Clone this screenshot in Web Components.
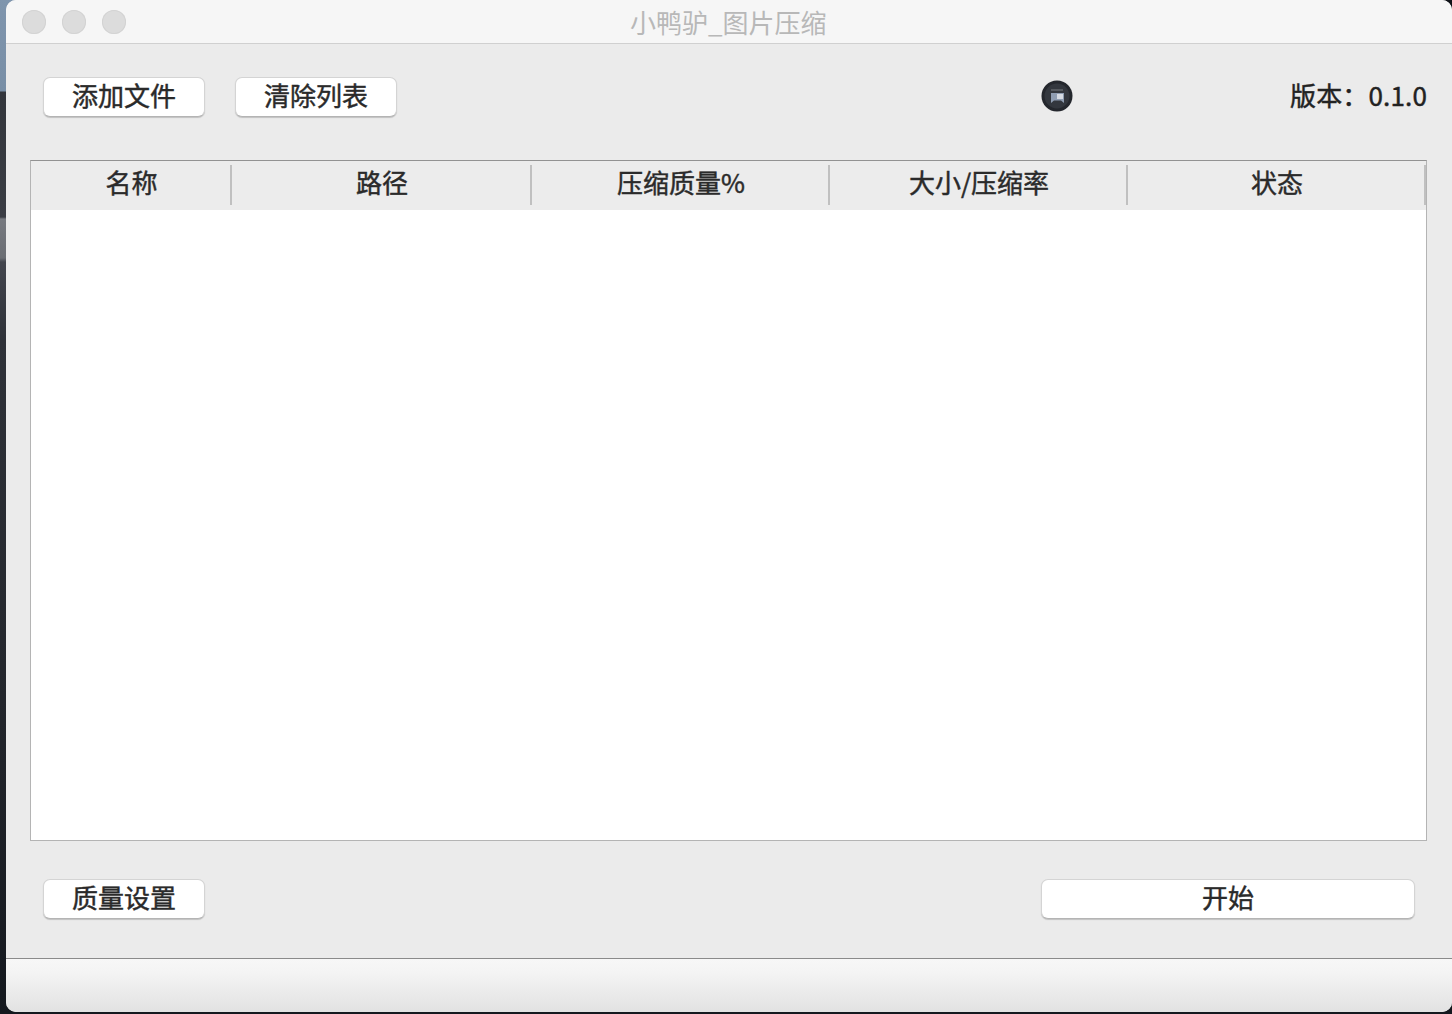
<!DOCTYPE html>
<html lang="zh">
<head>
<meta charset="utf-8">
<title>小鸭驴_图片压缩</title>
<style>
	html, body { margin: 0; height: 100%; }
	body {
		width: 1452px;
		height: 1014px;
		overflow: hidden;
		background:
			linear-gradient(#0f1218, #0f1218) top right / 14px 14px no-repeat,
			linear-gradient(to bottom, #7f95ad 0, #788ea6 91px, #33363c 92px, #3a3d44 217px, #777a80 219px, #6a6d73 258px, #42454d 262px, #2e3138 340px, #23262c 700px, #14181e 1014px);
		font-family: "Noto Sans CJK SC", "Liberation Sans", sans-serif;
		color: #2a2a2a;
	}
</style>
</head>
<body>
<app-window label="小鸭驴_图片压缩">
	<div slot="toolbar" style="display:flex;align-items:center;height:100%">
		<push-button style="width:162px">添加文件</push-button>
		<push-button style="width:162px;margin-left:30px">清除列表</push-button>
		<app-logo style="margin-left:644px"></app-logo>
		<span class="version" style="margin-left:auto;font-size:26px;line-height:36px;margin-top:-4px;letter-spacing:.15px;white-space:nowrap;color:#222;-webkit-text-stroke:.45px #222">版本：0.1.0</span>
	</div>
	<file-table slot="content" columns="名称:201,路径:300,压缩质量%:298,大小/压缩率:298,状态:298"></file-table>
	<div slot="actions" style="display:flex;align-items:center;justify-content:space-between">
		<push-button style="width:162px">质量设置</push-button>
		<push-button style="width:374px">开始</push-button>
	</div>
</app-window>

<script>
class AppWindow extends HTMLElement {
	constructor() {
		super();
		const label = this.getAttribute('label');
		this._root = this.attachShadow({mode: 'open'});
		this._root.innerHTML = `
			<style>
				:host {
					display: flex;
					flex-direction: column;
					box-sizing: border-box;
					width: 1446px;
					height: 1012px;
					margin-left: 6px;
					background: #ebebeb;
					border-radius: 10px;
					overflow: hidden;
				}
				.titlebar {
					flex: none;
					display: flex;
					align-items: center;
					height: 43px;
					padding-left: 16px;
					position: relative;
					background: #f6f6f6;
					border-bottom: 1px solid #d0d0d0;
				}
				.light {
					width: 24px;
					height: 24px;
					margin-right: 16px;
					border-radius: 50%;
					background: #dcdcdc;
					box-shadow: inset 0 0 0 1px #d3d3d3;
				}
				.title {
					position: absolute;
					left: 624px;
					top: 0;
					font-size: 26px;
					line-height: 43px;
					color: #b8b8b8;
					white-space: nowrap;
				}
				.toolbar {
					flex: none;
					height: 40px;
					margin: 33px 25px 0 37px;
				}
				.content {
					flex: none;
					height: 681px;
					margin: 43px 25px 0 24px;
				}
				.actions {
					flex: none;
					height: 40px;
					margin: 38px 37px 0 37px;
				}
				.statusbar {
					flex: none;
					height: 53px;
					margin-top: 39px;
					border-top: 1px solid #8a8a8a;
					background: linear-gradient(to bottom, #f7f7f7, #f4f4f4 25%, #e2e2e2);
				}
			</style>
			<div class="titlebar">
				<span class="light"></span><span class="light"></span><span class="light"></span>
				<span class="title">${label}</span>
			</div>
			<div class="toolbar"><slot name="toolbar"></slot></div>
			<div class="content"><slot name="content"></slot></div>
			<div class="actions"><slot name="actions"></slot></div>
			<div class="statusbar"></div>
		`;
	}
}

class PushButton extends HTMLElement {
	constructor() {
		super();
		this._root = this.attachShadow({mode: 'open'});
		this._root.innerHTML = `
			<style>
				:host {
					display: flex;
					align-items: center;
					justify-content: center;
					box-sizing: border-box;
					height: 40px;
					padding-bottom: 4px;
					background: #fff;
					border: 1px solid #d4d4d4;
					border-bottom: 1px solid #b4b4b4;
					border-radius: 7px;
					box-shadow: 0 1px 1px rgba(0, 0, 0, .18);
					font-size: 26px;
					line-height: 34px;
					color: #2a2a2a;
					-webkit-text-stroke: .45px #2a2a2a;
					white-space: nowrap;
				}
			</style>
			<slot></slot>
		`;
	}
}

class AppLogo extends HTMLElement {
	constructor() {
		super();
		this._root = this.attachShadow({mode: 'open'});
		this._root.innerHTML = `
			<style>
				:host { display: block; width: 32px; height: 32px; margin-top: -2px; }
				svg { display: block; filter: blur(.5px); }
			</style>
			<svg width="32" height="32" viewBox="0 0 32 32">
				<circle cx="16" cy="16" r="15.5" fill="#24272d"/>
				<circle cx="16" cy="16" r="12.5" fill="#33373e"/>
				<rect x="10" y="9" width="12" height="2" fill="#55595f"/>
				<path d="M10 13h13v10l-3-2.5h-7l-3 2.5z" fill="#8f9db2"/>
				<rect x="16" y="14" width="6" height="5" fill="#d5dae2"/>
			</svg>
		`;
	}
}

class FileTable extends HTMLElement {
	constructor() {
		super();
		const columns = this.getAttribute('columns').split(',').map((c) => c.split(':'));
		const cells = columns.map(([name, width]) => `<div class="cell" style="width:${width}px"><span>${name}</span></div>`).join('');
		this._root = this.attachShadow({mode: 'open'});
		this._root.innerHTML = `
			<style>
				:host {
					display: flex;
					flex-direction: column;
					box-sizing: border-box;
					height: 100%;
					background: #fff;
					border: 1px solid #b4b4b4;
					border-top-color: #929292;
				}
				.header {
					flex: none;
					display: flex;
					height: 49px;
					padding-top: 4px;
					box-sizing: border-box;
					background: #ececec;
				}
				.cell {
					flex: none;
					box-sizing: border-box;
					height: 40px;
					padding: 0 0 6px 2px;
					display: flex;
					align-items: center;
					justify-content: center;
					border-right: 2px solid #c0c0c0;
					font-size: 26px;
					line-height: 34px;
					color: #2a2a2a;
					-webkit-text-stroke: .45px #2a2a2a;
					white-space: nowrap;
				}
			</style>
			<div class="header">${cells}</div>
		`;
	}
}

window.customElements.define('app-window', AppWindow);
window.customElements.define('push-button', PushButton);
window.customElements.define('app-logo', AppLogo);
window.customElements.define('file-table', FileTable);
</script>
</body>
</html>
